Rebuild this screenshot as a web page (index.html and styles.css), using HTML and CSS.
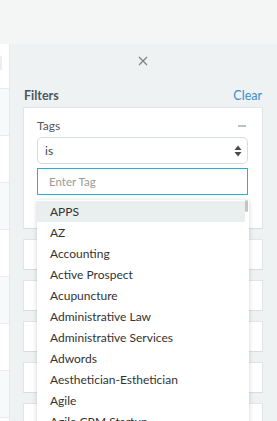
FILE: index.html
```html
<!DOCTYPE html>
<html>
<head>
<meta charset="utf-8">
<link rel="stylesheet" href="styles.css">
</head>
<body>
<div class="topbar"></div>
<div class="main">
  <div class="leftcol">
    <div class="lrow lrow-head"><span class="lcheck"></span></div>
    <div class="lrow alt"></div>
    <div class="lrow"></div>
    <div class="lrow alt"></div>
    <div class="lrow"></div>
    <div class="lrow alt"></div>
    <div class="lrow"></div>
    <div class="lrow alt"></div>
    <div class="lrow"></div>
  </div>
  <div class="panel">
    <div class="close-row">
      <svg class="close-icon" width="10" height="10" viewBox="0 0 10 10"><path d="M1 1 L9 9 M9 1 L1 9" stroke="#7d8285" stroke-width="1.2" fill="none"/></svg>
    </div>
    <div class="filters-head">
      <span class="filters-title">Filters</span>
      <span class="filters-clear">Clear</span>
    </div>
    <div class="card card-tags">
      <div class="tags-head">
        <span class="tags-label">Tags</span>
        <span class="minus"></span>
      </div>
      <div class="select">
        <span class="select-val">is</span>
        <svg class="select-arrows" width="8" height="12" viewBox="0 0 8 12"><path d="M4 0.5 L7.5 5 L0.5 5 Z" fill="#4a4a4a"/><path d="M0.5 7 L7.5 7 L4 11.5 Z" fill="#4a4a4a"/></svg>
      </div>
      <div class="tag-input">Enter Tag</div>
      <div class="dropdown">
        <ul class="options">
          <li class="active">APPS</li>
          <li>AZ</li>
          <li>Accounting</li>
          <li>Active Prospect</li>
          <li>Acupuncture</li>
          <li>Administrative Law</li>
          <li>Administrative Services</li>
          <li>Adwords</li>
          <li>Aesthetician-Esthetician</li>
          <li>Agile</li>
          <li>Agile CRM Startup</li>
        </ul>
        <div class="track"><div class="thumb"></div></div>
      </div>
    </div>
    <div class="card small"></div>
    <div class="card small"></div>
    <div class="card small"></div>
    <div class="card small"></div>
    <div class="card small"></div>
  </div>
</div>
</body>
</html>
```
FILE: styles.css
```css
* { box-sizing: border-box; }
html, body { margin: 0; padding: 0; }
body {
  width: 277px;
  height: 421px;
  overflow: hidden;
  font-family: "Lato", "Liberation Sans", sans-serif;
  background: #f4f5f5;
}
.topbar {
  height: 44px;
  background: #f4f5f5;
}
.main {
  display: flex;
  height: 377px;
  overflow: hidden;
}
.leftcol {
  width: 10px;
  flex: none;
  background: #fff;
  border-right: 1px solid #e4e8ea;
}
.lrow {
  height: 47px;
  border-bottom: 1px solid #e7ebed;
  background: #fff;
}
.lrow.alt { background: #f7f9fa; }
.lrow-head { height: 33px; }
.lcheck {
  display: block;
  width: 2px;
  height: 14px;
  margin-top: 12px;
  background: #eceff1;
}
.panel {
  flex: 1;
  background: #eef2f3;
  padding: 0 14px 0 13px;
  display: flex;
  flex-direction: column;
}
.panel > * { flex-shrink: 0; }
.close-row {
  display: flex;
  justify-content: center;
  padding-top: 12px;
  height: 37px;
}
.filters-head {
  display: flex;
  justify-content: space-between;
  align-items: center;
  height: 28px;
  padding: 0 1px 0 1px;
}
.filters-title {
  font-weight: 700;
  font-size: 12.5px;
  color: #4b5761;
}
.filters-clear {
  font-size: 12.5px;
  color: #3a8ccf;
}
.card {
  background: #fff;
  border: 1px solid #dfe5e8;
  border-bottom-color: #d7dee1;
}
.card-tags {
  position: relative;
  height: 122px;
  padding: 7px 14px 0 13px;
  margin-top: -2px;
}
.card.small {
  height: 31px;
  margin-top: 10px;
}
.tags-head {
  display: flex;
  justify-content: space-between;
  align-items: center;
  height: 21px;
}
.tags-label {
  font-size: 12px;
  color: #555;
}
.minus {
  width: 8px;
  height: 2px;
  background: #b9c2c6;
  margin-right: 2px;
}
.select {
  margin-top: 1px;
  height: 27px;
  border: 1px solid #d4dde0;
  border-radius: 5px;
  display: flex;
  align-items: center;
  justify-content: space-between;
  padding: 0 5px 0 7px;
}
.select-val {
  font-size: 12px;
  color: #444;
}
.tag-input {
  margin-top: 4px;
  height: 27px;
  border: 1px solid #25afd6;
  display: flex;
  align-items: center;
  padding-left: 11px;
  font-size: 11.5px;
  color: #9a9a9a;
}
.dropdown {
  position: absolute;
  left: 13px;
  top: 92px;
  width: 212px;
  height: 240px;
  background: #fff;
  box-shadow: 0 1px 5px rgba(0, 0, 0, 0.18);
  display: flex;
  z-index: 2;
}
.options {
  list-style: none;
  margin: 0;
  padding: 1px 0 0 0;
  flex: 1;
}
.options li {
  height: 21px;
  line-height: 21px;
  padding-left: 13px;
  font-size: 12px;
  color: #333;
  white-space: nowrap;
}
.options li.active { background: #e9eeee; }
.track {
  width: 4px;
  flex: none;
}
.thumb {
  width: 3px;
  height: 12px;
  background: #c4c4c4;
  border-radius: 2px;
}
```
